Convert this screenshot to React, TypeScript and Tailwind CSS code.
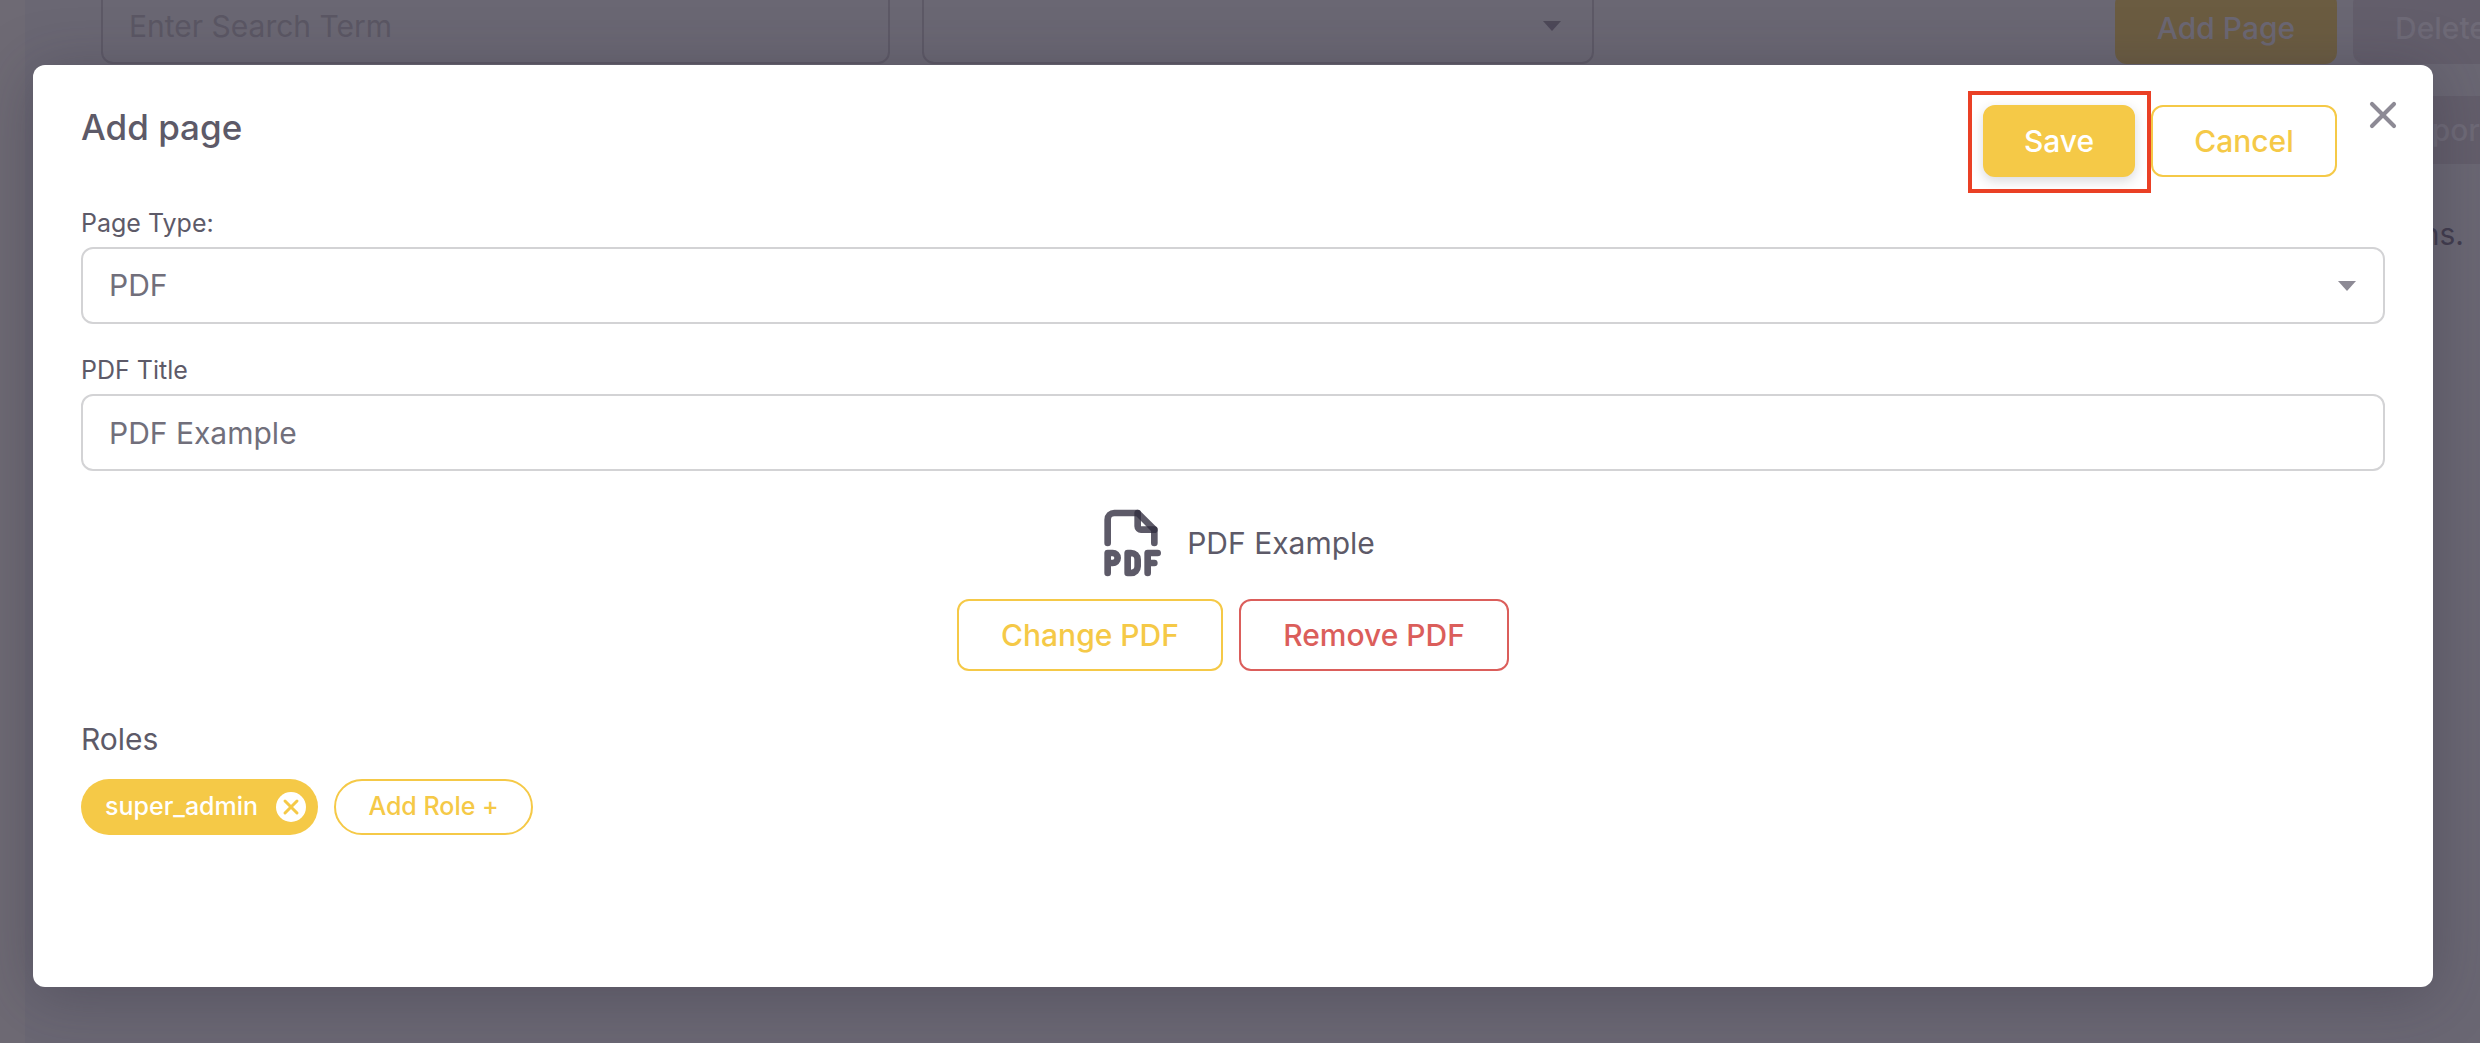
import { useState } from "react";
import type { ReactNode } from "react";
import { X } from "lucide-react";
import clsx from "clsx";

const pageTypes = ["PDF", "Text", "Video"];

const fieldClass =
    "block h-[77px] w-full appearance-none rounded-xl border-2 border-[#d3d3d5] bg-white px-[26px] text-[30px] text-[#716f7b] outline-none";

function Caret({ className }: { className?: string }) {
    return (
        <svg viewBox="0 0 20 10" className={clsx("pointer-events-none h-[10px] w-5", className)} aria-hidden>
            <path d="M1 0h18L10 10z" fill="currentColor" />
        </svg>
    );
}

function PdfIcon() {
    return (
        <svg
            viewBox="0 0 24 24"
            className="size-20 text-[#2f2b3d]/78"
            fill="none"
            stroke="currentColor"
            strokeWidth="2"
            strokeLinecap="round"
            strokeLinejoin="round"
            aria-hidden
        >
            <path d="M14 3v4a1 1 0 0 0 1 1h4" />
            <path d="M5 12V5a2 2 0 0 1 2-2h7l5 5v4" />
            <path d="M5 18h1.5a1.5 1.5 0 0 0 0-3H5v6M17 18h2M20 15h-3v6M11 15v6h1a2 2 0 0 0 2-2v-2a2 2 0 0 0-2-2h-1z" />
        </svg>
    );
}

function Button({ className, children }: { className?: string; children: ReactNode }) {
    return (
        <button
            type="button"
            className={clsx("shrink-0 rounded-xl border-2 text-[30px] font-medium whitespace-nowrap", className)}
        >
            {children}
        </button>
    );
}

// Page list that stays visible, dimmed, behind the dialog
function PageList() {
    return (
        <div className="flex min-h-screen overflow-hidden bg-[#6a6773]">
            <aside className="w-[25px] shrink-0 bg-[#6e6a74]" />
            <main className="min-w-0 flex-1 pl-[76px]">
                <div className="flex h-16 items-end">
                    <input
                        aria-label="Search"
                        placeholder="Enter Search Term"
                        className="h-[77px] w-[789px] rounded-xl border-2 border-[#5d5966] px-[26px] text-[30px] text-[#5b5764] placeholder:text-[#5b5764]"
                    />
                    <div className="relative ml-8 w-[672px]">
                        <select
                            aria-label="Filter"
                            className="block h-[77px] w-full appearance-none rounded-xl border-2 border-[#5d5966]"
                        />
                        <Caret className="absolute top-[34px] right-8 text-[#4d4858]" />
                    </div>
                    <div className="ml-auto flex w-[365px] gap-4">
                        <Button className="h-[72px] w-[222px] border-[#6b5c41] bg-[#6b5c41] text-[#6b6773]">Add Page</Button>
                        <Button className="h-[72px] w-[222px] border-[#635e6b] bg-[#635e6b] px-10 text-left text-[#6e6a77]">Delete</Button>
                    </div>
                </div>
                <div className="mt-8 ml-auto w-[127px]">
                    <Button className="h-[68px] w-[222px] border-[#635e6b] bg-[#635e6b] px-10 text-left text-[#6e6a77]">Report</Button>
                </div>
                <p className="mt-[50px] pr-4 text-right text-[30px] leading-10 text-[#413c4e]">ns.</p>
            </main>
        </div>
    );
}

function AddPageDialog() {
    const [type, setType] = useState("PDF");
    const [title, setTitle] = useState("PDF Example");

    return (
        <div
            role="dialog"
            aria-modal="true"
            aria-labelledby="dialog-title"
            className="relative rounded-xl bg-white px-12 pt-10 pb-38 text-[#5d5a68] shadow-[0_8px_60px_rgba(47,43,61,0.35)]"
        >
            <div className="flex items-start justify-between pr-12">
                <h1 id="dialog-title" className="text-[35px] leading-11 font-medium">Add page</h1>
                <div className="flex gap-4">
                    <div className="relative">
                        <Button className="h-[72px] w-[152px] border-[#f5c947] bg-[#f5c947] text-white shadow-[0_4px_12px_rgba(47,43,61,0.18)]">Save</Button>
                        <span className="pointer-events-none absolute -top-[14px] -right-4 -bottom-4 -left-[15px] z-10 border-4 border-[#ea4025]" />
                    </div>
                    <Button className="h-[72px] w-[186px] border-[#f5c947] text-[#f5c947]">Cancel</Button>
                </div>
            </div>
            <button type="button" aria-label="Close" className="absolute top-7 right-7 text-[#8d8a95]">
                <X className="size-11" strokeWidth={2.25} />
            </button>

            <div className="mt-[30px]">
                <label htmlFor="page-type" className="mb-2 block text-[25px] leading-8">Page Type:</label>
                <div className="relative">
                    <select id="page-type" value={type} onChange={(e) => setType(e.target.value)} className={fieldClass}>
                        {pageTypes.map((item) => (
                            <option key={item}>{item}</option>
                        ))}
                    </select>
                    <Caret className="absolute top-[34px] right-7 text-[#8d8a95]" />
                </div>
            </div>

            <div className="mt-[30px]">
                <label htmlFor="pdf-title" className="mb-2 block text-[25px] leading-8">PDF Title</label>
                <input id="pdf-title" value={title} onChange={(e) => setTitle(e.target.value)} className={fieldClass} />
            </div>

            <div className="mt-8 flex items-center justify-center gap-4">
                <PdfIcon />
                <span className="text-[30px]">PDF Example</span>
            </div>
            <div className="mt-4 flex justify-center gap-4">
                <Button className="h-[72px] w-[266px] border-[#f5c947] text-[#f5c947]">Change PDF</Button>
                <Button className="h-[72px] w-[270px] border-[#db5e5b] text-[#db5e5b]">Remove PDF</Button>
            </div>

            <h2 className="mt-12 text-[30px] leading-10">Roles</h2>
            <div className="mt-5 flex gap-4">
                <span className="flex h-14 items-center gap-[18px] rounded-full bg-[#f5c947] pr-3 pl-6 text-[25px] font-medium text-white">
                    super_admin
                    <button type="button" aria-label="Remove super_admin" className="flex size-[30px] items-center justify-center rounded-full bg-white text-[#f5c947]">
                        <X className="size-6" strokeWidth={3} />
                    </button>
                </span>
                <button type="button" className="h-14 w-[199px] rounded-full border-2 border-[#f5c947] text-[25px] font-medium text-[#f5c947]">
                    Add Role +
                </button>
            </div>
        </div>
    );
}

export default function App() {
    return (
        <div className="relative overflow-hidden font-['Inter',sans-serif]">
            <PageList />
            <div className="absolute inset-0 pt-[65px] pr-[47px] pl-[33px]">
                <AddPageDialog />
            </div>
        </div>
    );
}
